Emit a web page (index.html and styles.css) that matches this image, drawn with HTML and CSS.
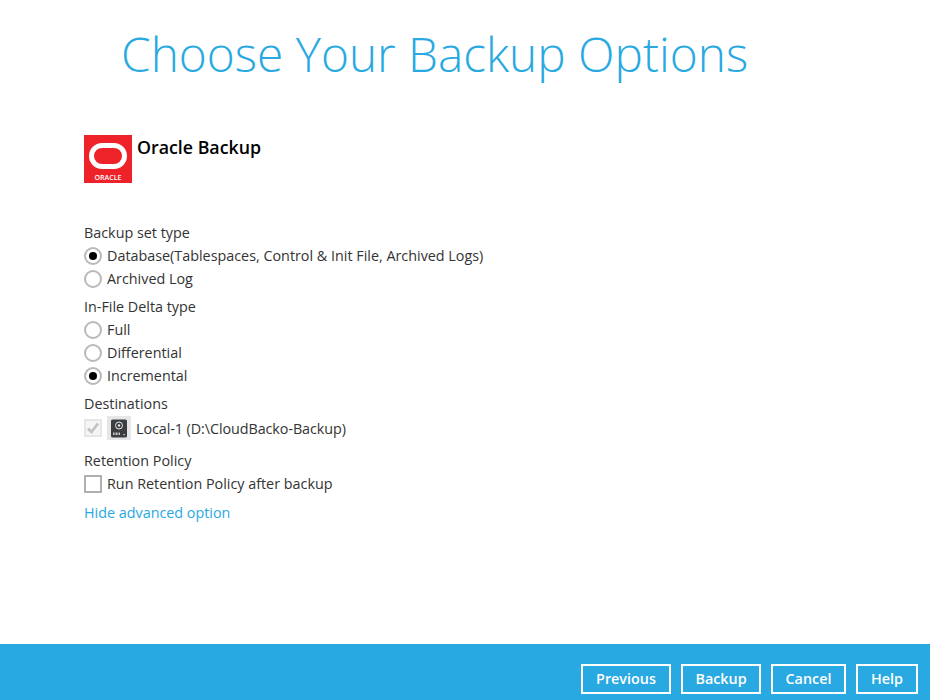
FILE: index.html
```html
<!doctype html>
<html lang="en">
    <head>
        <meta charset="UTF-8" />
        <title>Choose Your Backup Options</title>
        <link rel="stylesheet" href="styles.css">
    </head>
    <body>
        <main class="content">
            <h1 class="title">Choose Your Backup Options</h1>

            <div class="setName">
                <svg class="oracleLogo" width="48" height="48" viewBox="0 0 48 48">
                    <rect width="48" height="48" fill="#ee2229"/>
                    <rect x="7.5" y="10.5" width="33" height="21" rx="10.5" fill="none" stroke="#fff" stroke-width="5"/>
                    <text x="24" y="44.5" class="oracleText">ORACLE</text>
                </svg>
                <span>Oracle Backup</span>
            </div>

            <div class="group">
                <div class="groupLabel">Backup set type</div>
                <label class="option"><span class="radio on"></span>Database(Tablespaces, Control &amp; Init File, Archived Logs)</label>
                <label class="option"><span class="radio"></span>Archived Log</label>
            </div>

            <div class="group">
                <div class="groupLabel">In-File Delta type</div>
                <label class="option"><span class="radio"></span>Full</label>
                <label class="option"><span class="radio"></span>Differential</label>
                <label class="option"><span class="radio on"></span>Incremental</label>
            </div>

            <div class="group">
                <div class="groupLabel">Destinations</div>
                <label class="destination">
                    <span class="check disabled">
                        <svg width="18" height="18" viewBox="0 0 18 18"><path d="M4 9.5l3.5 3.5 6.5-8.5" fill="none" stroke="#c2c2c2" stroke-width="2.8"/></svg>
                    </span>
                    <span class="driveIcon">
                        <svg width="24" height="24" viewBox="0 0 24 24">
                            <rect width="24" height="24" fill="#e6e6e6"/>
                            <rect x="4" y="3.5" width="16" height="18" rx="1.5" fill="#3c3f42"/>
                            <circle cx="12" cy="9.5" r="3.5" fill="none" stroke="#e8e8e8" stroke-width="1"/>
                            <circle cx="12" cy="9.5" r="1.2" fill="#e8e8e8"/>
                            <path d="M6.5 16.5v2.5M8 16.5v2.5M9.5 16.5v2.5M11 16.5v2.5M12.5 16.5v2.5" stroke="#e8e8e8" stroke-width="0.8"/>
                            <rect x="16.5" y="18" width="1.2" height="1.2" fill="#e8e8e8"/>
                        </svg>
                    </span>
                    Local-1 (D:\CloudBacko-Backup)
                </label>
            </div>

            <div class="group">
                <div class="groupLabel">Retention Policy</div>
                <label class="option"><span class="check"></span>Run Retention Policy after backup</label>
            </div>

            <a class="advanced" href="#">Hide advanced option</a>
        </main>

        <footer class="footer">
            <button type="button" class="footerBtn btnPrevious">Previous</button>
            <button type="button" class="footerBtn btnBackup">Backup</button>
            <button type="button" class="footerBtn btnCancel">Cancel</button>
            <button type="button" class="footerBtn btnHelp">Help</button>
        </footer>
    </body>
</html>
```

FILE: styles.css
```css
* {
    box-sizing: border-box;
}
html, body {
    height: 100%;
}
body {
    margin: 0;
    display: flex;
    flex-direction: column;
    background-color: #fff;
    color: #333;
    font-family: "Open Sans", sans-serif;
    font-size: 14.35px;
    overflow: hidden;
}
.content {
    flex: 1;
    padding: 0 84px;
}
.title {
    margin: 21px 0 0 37px;
    color: #29a9e1;
    font-size: 47.75px;
    font-weight: 300;
    line-height: 65px;
}
.setName {
    display: flex;
    align-items: flex-start;
    gap: 5px;
    margin-top: 49px;
    color: #000;
    font-size: 17.8px;
    font-weight: 600;
    line-height: 25px;
}
.oracleLogo {
    display: block;
}
.oracleText {
    fill: #fff;
    font-size: 7px;
    font-weight: 600;
    text-anchor: middle;
}
.group {
    margin-bottom: 7px;
}
.setName + .group {
    margin-top: 40px;
}
.groupLabel {
    line-height: 19px;
    margin-bottom: 2px;
}
.option {
    display: flex;
    align-items: center;
    gap: 5px;
    height: 23px;
}
.radio {
    width: 18px;
    height: 18px;
    border: 2px solid #b9b9b9;
    border-radius: 50%;
    display: flex;
    align-items: center;
    justify-content: center;
}
.radio.on::after {
    content: "";
    width: 8px;
    height: 8px;
    border-radius: 50%;
    background-color: #000;
}
.check {
    display: block;
    width: 18px;
    height: 18px;
    border: 2px solid #b0b0b0;
}
.check.disabled {
    border-color: #e6e6e6;
    background-color: #f5f5f5;
}
.check.disabled svg {
    display: block;
    margin: -2px;
}
.destination {
    display: flex;
    align-items: center;
    height: 24px;
    margin-top: 3px;
    margin-bottom: 11px;
    letter-spacing: -0.07px;
}
.driveIcon {
    margin: 0 5px;
    height: 24px;
}
.advanced {
    display: inline-block;
    margin-top: 1px;
    color: #29a9e1;
    line-height: 19px;
    text-decoration: none;
}
.footer {
    display: flex;
    justify-content: flex-end;
    align-items: flex-end;
    gap: 10px;
    height: 56px;
    padding: 0 12px 6px 0;
    background-color: #28a9e1;
}
.footerBtn {
    height: 30px;
    padding: 0 0 2px;
    border: 2px solid #fff;
    background: none;
    color: #fff;
    font-family: "Open Sans", sans-serif;
    font-size: 14.35px;
    font-weight: 600;
}
.btnPrevious {
    width: 90px;
}
.btnBackup {
    width: 80px;
}
.btnCancel {
    width: 75px;
}
.btnHelp {
    width: 62px;
}
```
